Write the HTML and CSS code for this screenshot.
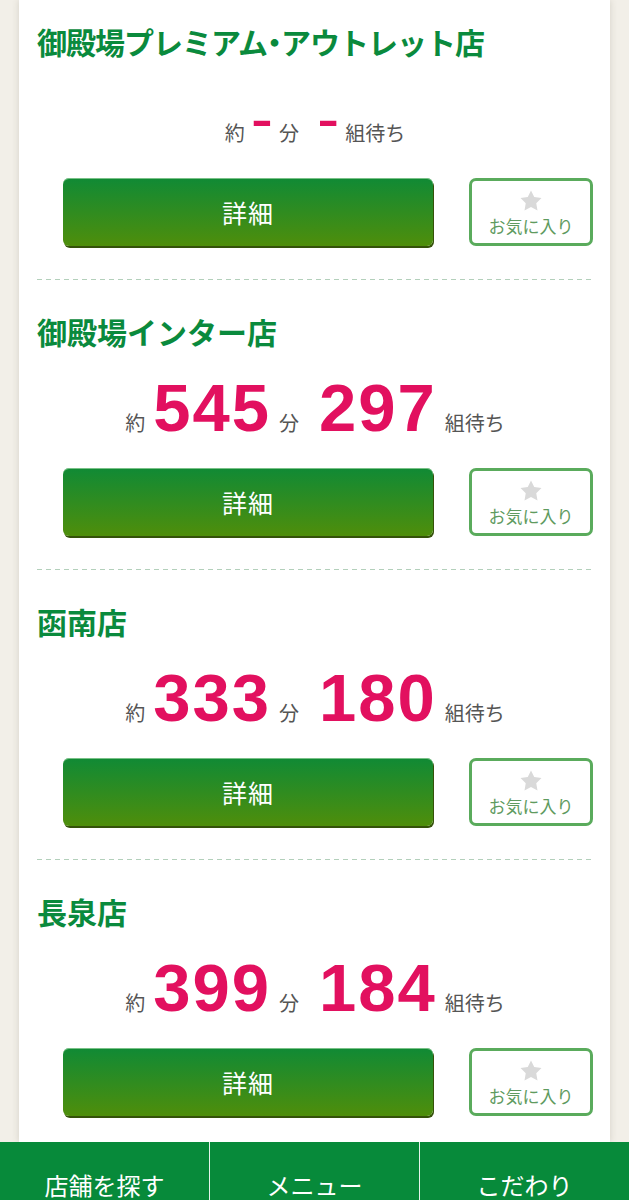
FILE: index.html
```html
<!DOCTYPE html>
<html lang="ja">
<head>
  <meta charset="UTF-8">
  <meta name="viewport" content="width=device-width, initial-scale=1.0">
  <title>店舗の待ち時間</title>
  <link rel="stylesheet" href="styles.css">
</head>
<body>
  <div class="page">
    <main class="card">
      <section class="shop">
        <h2 class="shop-name long">御殿場プレミアム<span class="dot">・</span>アウトレット店</h2>
        <p class="wait"><span class="label">約</span><span class="num empty">-</span><span class="label unit">分</span><span class="num empty">-</span><span class="label">組待ち</span></p>
        <div class="actions">
          <a class="detail-btn" href="#">詳細</a>
          <a class="fav-btn" href="#">
            <svg class="star" viewBox="0 0 24 24"><path d="M12 2.2l3 6.1 6.7 1-4.85 4.7 1.15 6.7L12 17.5l-6 3.2 1.15-6.7L2.3 9.3l6.7-1z"/></svg>
            <span>お気に入り</span>
          </a>
        </div>
      </section>
      <hr class="divider">
      <section class="shop">
        <h2 class="shop-name">御殿場インター店</h2>
        <p class="wait"><span class="label">約</span><span class="num">545</span><span class="label unit">分</span><span class="num">297</span><span class="label">組待ち</span></p>
        <div class="actions">
          <a class="detail-btn" href="#">詳細</a>
          <a class="fav-btn" href="#">
            <svg class="star" viewBox="0 0 24 24"><path d="M12 2.2l3 6.1 6.7 1-4.85 4.7 1.15 6.7L12 17.5l-6 3.2 1.15-6.7L2.3 9.3l6.7-1z"/></svg>
            <span>お気に入り</span>
          </a>
        </div>
      </section>
      <hr class="divider">
      <section class="shop">
        <h2 class="shop-name">函南店</h2>
        <p class="wait"><span class="label">約</span><span class="num">333</span><span class="label unit">分</span><span class="num">180</span><span class="label">組待ち</span></p>
        <div class="actions">
          <a class="detail-btn" href="#">詳細</a>
          <a class="fav-btn" href="#">
            <svg class="star" viewBox="0 0 24 24"><path d="M12 2.2l3 6.1 6.7 1-4.85 4.7 1.15 6.7L12 17.5l-6 3.2 1.15-6.7L2.3 9.3l6.7-1z"/></svg>
            <span>お気に入り</span>
          </a>
        </div>
      </section>
      <hr class="divider">
      <section class="shop">
        <h2 class="shop-name">長泉店</h2>
        <p class="wait"><span class="label">約</span><span class="num">399</span><span class="label unit">分</span><span class="num">184</span><span class="label">組待ち</span></p>
        <div class="actions">
          <a class="detail-btn" href="#">詳細</a>
          <a class="fav-btn" href="#">
            <svg class="star" viewBox="0 0 24 24"><path d="M12 2.2l3 6.1 6.7 1-4.85 4.7 1.15 6.7L12 17.5l-6 3.2 1.15-6.7L2.3 9.3l6.7-1z"/></svg>
            <span>お気に入り</span>
          </a>
        </div>
      </section>
    </main>
    <nav class="tabbar">
      <a class="tab" href="#">店舗を探す</a>
      <a class="tab" href="#">メニュー</a>
      <a class="tab" href="#">こだわり</a>
    </nav>
  </div>
</body>
</html>
```

FILE: styles.css
```css
body {
  margin: 0;
  background: #f2efe8;
  font-family: 'Noto Sans CJK JP', 'Noto Sans', sans-serif;
  color: #555555;
}
a {
  text-decoration: none;
}
.page {
  height: 100vh;
  display: flex;
  flex-direction: column;
  overflow: hidden;
}
.card {
  flex: 1;
  min-height: 0;
  overflow: hidden;
  margin: 0 19px;
  padding: 0 17px 0 18px;
  background: #FFFFFF;
  box-shadow: 0 0 7px rgba(80, 70, 50, 0.18);
}
.shop {
  padding: 31px 0 33px 0;
}
.shop:first-child {
  padding-top: 21px;
}
.shop-name {
  margin: 0;
  font-size: 30px;
  line-height: 40px;
  font-weight: 700;
  color: #0a8a3d;
  white-space: nowrap;
}
.shop-name.long {
  letter-spacing: -1px;
}
.dot {
  font-feature-settings: "palt";
}
.wait {
  display: flex;
  justify-content: center;
  align-items: baseline;
  margin: 24px 0 27px 0;
}
.label {
  font-size: 20px;
  line-height: 20px;
  color: #555555;
}
.unit {
  margin-right: 12px;
}
.num {
  font-family: 'Liberation Sans', Arial, sans-serif;
  font-weight: 700;
  font-size: 67px;
  line-height: 66px;
  letter-spacing: 2px;
  color: #e2105f;
  margin: 0 8px;
}
.num.empty {
  font-weight: 400;
  margin: 0 4px 0 6px;
}
.actions {
  display: flex;
  gap: 36px;
  padding-left: 26px;
}
.detail-btn {
  flex: 1;
  height: 68px;
  display: flex;
  align-items: center;
  justify-content: center;
  border-radius: 6px;
  background: linear-gradient(#108a35, #4f8e0b);
  box-shadow: inset 0 1px 0 rgba(190, 230, 190, 0.6), 1px 2px 0 #35520a;
  color: #FFFFFF;
  font-size: 25px;
  letter-spacing: 1px;
}
.fav-btn {
  width: 124px;
  height: 68px;
  box-sizing: border-box;
  border: 3px solid #5aab5c;
  border-radius: 7px;
  display: flex;
  flex-direction: column;
  align-items: center;
  padding-top: 7px;
  gap: 2px;
  color: #5f9b5f;
  font-size: 17px;
  line-height: 20px;
}
.star {
  width: 26px;
  height: 26px;
  fill: #d9d9d9;
}
.divider {
  height: 1px;
  margin: 0;
  border: none;
  background: repeating-linear-gradient(90deg, #b3d0bb 0 5px, transparent 5px 9px);
}
.tabbar {
  flex-shrink: 0;
  height: 58px;
  display: flex;
  background: #078a3a;
}
.tab {
  flex: 1;
  overflow: hidden;
  padding-top: 31px;
  text-align: center;
  font-size: 24px;
  line-height: 24px;
  color: #FFFFFF;
}
.tab + .tab {
  border-left: 1px solid rgba(255, 255, 255, 0.9);
}
```
